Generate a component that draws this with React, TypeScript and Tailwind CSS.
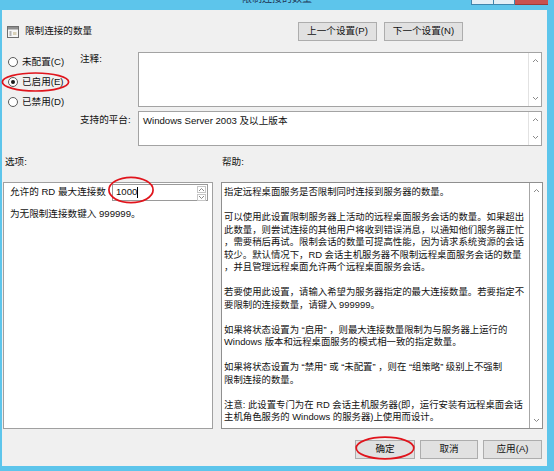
import React from 'react';

const helpParas: string[][] = [
  ['指定远程桌面服务是否限制同时连接到服务器的数量。'],
  [
    '可以使用此设置限制服务器上活动的远程桌面服务会话的数量。如果超出',
    '此数量，则尝试连接的其他用户将收到错误消息，以通知他们服务器正忙',
    '，需要稍后再试。限制会话的数量可提高性能，因为请求系统资源的会话',
    '较少。默认情况下，RD 会话主机服务器不限制远程桌面服务会话的数量',
    '，并且管理远程桌面允许两个远程桌面服务会话。',
  ],
  [
    '若要使用此设置，请输入希望为服务器指定的最大连接数量。若要指定不',
    '要限制的连接数量，请键入 999999。',
  ],
  [
    '如果将状态设置为 “启用” ，则最大连接数量限制为与服务器上运行的',
    'Windows 版本和远程桌面服务的模式相一致的指定数量。',
  ],
  [
    '如果将状态设置为 “禁用” 或 “未配置” ，则在 “组策略” 级别上不强制',
    '限制连接的数量。',
  ],
  [
    '注意: 此设置专门为在 RD 会话主机服务器(即，运行安装有远程桌面会话',
    '主机角色服务的 Windows 的服务器)上使用而设计。',
  ],
];

function Chevron({ up }: { up?: boolean }) {
  return (
    <svg width="7" height="5" viewBox="0 0 7 5">
      <path d={up ? 'M1 4 L3.5 1.5 L6 4' : 'M1 1 L3.5 3.5 L6 1'} fill="none" stroke="#8a8a8a" strokeWidth="1" />
    </svg>
  );
}

// thin vertical scrollbar used by the edit boxes
function ScrollCol({ dark }: { dark?: boolean }) {
  return (
    <div className={`w-[13px] shrink-0 flex flex-col justify-between items-center py-[5px] border-l ${dark ? 'border-[#a6a6a6]' : 'border-[#e2e2e2]'}`}>
      <Chevron up />
      <Chevron />
    </div>
  );
}

function Radio({ label, checked }: { label: string; checked?: boolean }) {
  return (
    <div className="h-5 flex items-center gap-[4px]">
      <span className="w-[10px] h-[10px] rounded-full border border-[#5a5a5a] bg-white flex items-center justify-center">
        {checked && <span className="w-[4px] h-[4px] rounded-full bg-[#1a1a1a]" />}
      </span>
      <span>{label}</span>
    </div>
  );
}

function Btn({ children, w }: { children: React.ReactNode; w: string }) {
  return (
    <div className={`${w} h-[19px] flex items-center justify-center bg-[#e1e1e1] border border-[#adadad]`}>
      {children}
    </div>
  );
}

function RedRing({ className }: { className: string }) {
  return (
    <svg className={`absolute ${className}`} viewBox="0 0 100 40" preserveAspectRatio="none">
      <ellipse cx="50" cy="20" rx="48" ry="18" fill="none" stroke="#e0141c" strokeWidth="1.7" vectorEffect="non-scaling-stroke" />
    </svg>
  );
}

function PolicyIcon() {
  return (
    <svg width="12" height="12" viewBox="0 0 12 12">
      <rect x="0.5" y="0.5" width="11" height="11" fill="#f6f6f6" stroke="#6e6e6e" />
      <rect x="1" y="1" width="10" height="2.5" fill="#8e8e8e" />
      <rect x="2.5" y="5" width="2" height="5" fill="#b4b4b4" />
      <rect x="6" y="6" width="3.5" height="3" fill="#d8d0b8" />
    </svg>
  );
}

export default function App() {
  return (
    <div className="relative w-[554px] h-[471px] overflow-hidden bg-[#5dc5eb] text-[9.6px] text-[#111] font-['Liberation_Sans','Noto_Sans_CJK_SC',sans-serif]">
      {/* title bar, mostly cropped */}
      <div className="h-[10px] grid grid-cols-[1fr_auto_1fr] overflow-hidden">
        <div />
        <div className="-mt-[7px] leading-[12px] text-[10px] text-[#1d3656]">限制连接的数量</div>
        <div className="flex justify-end pr-[6px]">
          <div className="w-[23px] h-[5px] bg-[#e4eff6] border-x border-b border-[#3f86ad]" />
          <div className="w-[21px] h-[5px] bg-[#e4eff6] border-r border-b border-[#3f86ad]" />
          <div className="w-[33px] h-[5px] bg-[#c9524f] border-b border-[#9c3b38]" />
        </div>
      </div>

      <div className="ml-[2px] w-[545px] h-[456px] bg-[#f0f0f0] flex flex-col leading-[12.5px]">
        {/* header */}
        <div className="mt-[12px] h-[19px] flex items-center">
          <div className="w-[296px] flex items-center gap-[6px] pl-[5px]">
            <PolicyIcon />
            <span>限制连接的数量</span>
          </div>
          <Btn w="w-[79px]">上一个设置(P)</Btn>
          <div className="w-[7px]" />
          <Btn w="w-[79px]">下一个设置(N)</Btn>
        </div>

        {/* state + comment + platform */}
        <div className="mt-[11px] flex">
          <div className="w-[78px] pl-[6px] flex flex-col">
            <Radio label="未配置(C)" />
            <Radio label="已启用(E)" checked />
            <Radio label="已禁用(D)" />
          </div>
          <div className="grid grid-cols-[58px_404px] grid-rows-[55px_35px] gap-y-[4px]">
            <div className="pt-[1px]">注释:</div>
            <div className="bg-white border border-[#a3a3a3] flex">
              <div className="flex-1" />
              <ScrollCol />
            </div>
            <div className="pt-[3px]">支持的平台:</div>
            <div className="bg-white border border-[#a3a3a3] flex">
              <div className="flex-1 pl-[4px] pt-[3px]">Windows Server 2003 及以上版本</div>
              <ScrollCol />
            </div>
          </div>
        </div>

        {/* section captions */}
        <div className="h-[36px] pl-[1px] grid grid-cols-[210px_322px] gap-x-[8px] items-center pb-[4px]">
          <div className="pl-[2px]">选项:</div>
          <div className="pl-[1px]">帮助:</div>
        </div>

        {/* options + help panels */}
        <div className="h-[247px] pl-[1px] grid grid-cols-[210px_322px] gap-x-[8px]">
          <div className="bg-white border border-[#a0a0a0] flex flex-col">
            <div className="mt-[1px] flex items-center">
              <div className="w-[108px] pl-[6px] whitespace-nowrap">允许的 RD 最大连接数</div>
              <div className="w-[96px] h-[17px] border border-[#9a9a9a] flex items-center">
                <div className="flex-1 pl-[3px] flex items-center">
                  <span>1000</span>
                  <span className="w-px h-[11px] bg-black" />
                </div>
                <div className="w-[10px] h-full flex flex-col gap-px py-px pr-px">
                  <div className="flex-1 border border-[#c6c6c6] flex items-center justify-center">
                    <Chevron up />
                  </div>
                  <div className="flex-1 border border-[#c6c6c6] flex items-center justify-center">
                    <Chevron />
                  </div>
                </div>
              </div>
            </div>
            <div className="mt-[7px] pl-[6px]">为无限制连接数键入 999999。</div>
          </div>

          <div className="bg-white border border-[#8f8f8f] flex">
            <div className="flex-1 pl-[2px] pt-[3px] overflow-hidden flex flex-col gap-[12.5px] text-[9.4px]">
              {helpParas.map((p, i) => (
                <div key={i}>
                  {p.map((line, j) => (
                    <div key={j} className="whitespace-nowrap">{line}</div>
                  ))}
                </div>
              ))}
            </div>
            <ScrollCol dark />
          </div>
        </div>

        {/* dialog buttons */}
        <div className="mt-[11px] pr-[5px] flex justify-end gap-[5px]">
          <Btn w="w-[60px]">确定</Btn>
          <Btn w="w-[58px]">取消</Btn>
          <Btn w="w-[59px]">应用(A)</Btn>
        </div>
      </div>

      <RedRing className="left-[1px] top-[72px] w-[69px] h-[20px]" />
      <RedRing className="left-[108px] top-[176px] w-[46px] h-[28px]" />
      <RedRing className="left-[355px] top-[436px] w-[60px] h-[24px]" />
    </div>
  );
}
